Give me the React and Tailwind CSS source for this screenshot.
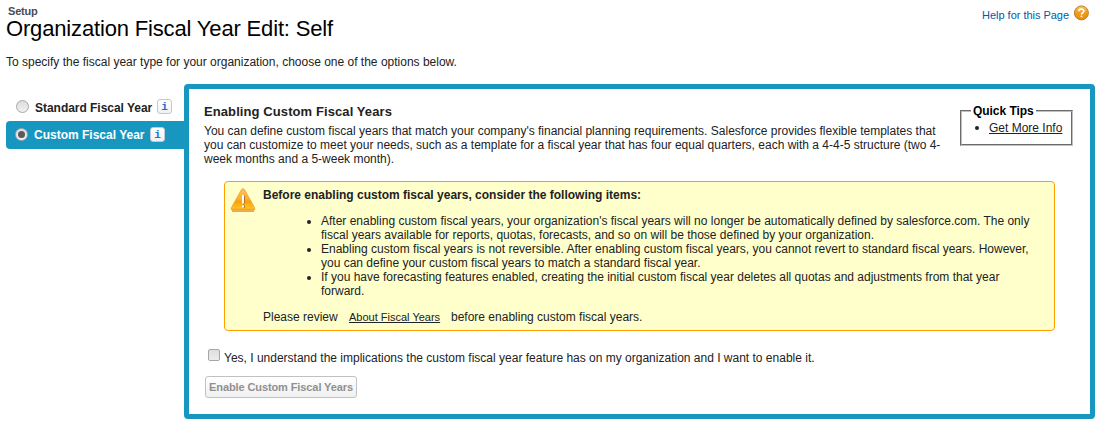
import React from 'react';

function InfoBadge() {
  return (
    <span className="flex h-[15px] w-[15px] shrink-0 items-center justify-center rounded-[3px] border border-[#c4c9cf] bg-linear-to-b from-white to-[#f0f1f4] pt-[1px] font-['Liberation_Mono',monospace] text-[11px] font-bold leading-none text-[#1f6fc6]">
      i
    </span>
  );
}

function Radio({ checked }) {
  return (
    <span className="mt-[1px] flex h-[13px] w-[13px] shrink-0 items-center justify-center rounded-full border border-[#a8a8a8] bg-linear-to-b from-[#dcdcdc] to-[#f1f1f1]">
      {checked && <span className="h-[7px] w-[7px] rounded-full bg-[#5a5a5a]" />}
    </span>
  );
}

function WarningIcon() {
  return (
    <svg className="block h-6 w-[26px]" viewBox="0 0 26 24">
      <defs>
        <linearGradient id="warn" x1="0" y1="0" x2="0" y2="1">
          <stop offset="0" stopColor="#fbc55c" />
          <stop offset="0.45" stopColor="#fbb130" />
          <stop offset="0.6" stopColor="#fb9f0c" />
          <stop offset="0.88" stopColor="#fdc21e" />
          <stop offset="1" stopColor="#f49a20" />
        </linearGradient>
      </defs>
      <path d="M2 23.4h22" stroke="#b5aa90" strokeWidth="1" />
      <path d="M11.5 1.6Q13 -0.4 14.5 1.6L24.7 19.8Q25.4 22.4 23.4 22.4H2.6Q.6 22.4 1.3 19.8Z" fill="url(#warn)" stroke="#f0a040" strokeWidth="0.8" />
      <path d="M13 7.6h2v7l-1 2.2h-1zM13 17.8h2v2h-2.4z" fill="#a8752a" />
      <path d="M12 7h2v7l-.5 2h-1l-.5-2zM12 17.4h2v2h-2z" fill="#fff" />
    </svg>
  );
}

function HelpIcon() {
  return (
    <svg className="block h-4 w-4" viewBox="0 0 16 16">
      <defs>
        <linearGradient id="help" x1="0" y1="0" x2="0" y2="1">
          <stop offset="0" stopColor="#f9c56c" />
          <stop offset="0.5" stopColor="#ef9c1c" />
          <stop offset="1" stopColor="#ea8c08" />
        </linearGradient>
      </defs>
      <circle cx="8.4" cy="7.9" r="7" fill="url(#help)" stroke="#b87418" strokeWidth="0.9" />
      <path d="M5.8 6.2C5.8 3.4 10.9 3.4 10.9 6.1C10.9 7.7 8.4 7.8 8.4 9.6" fill="none" stroke="#fff" strokeWidth="1.6" />
      <path d="M7.6 10.6h1.7v1.6H7.6z" fill="#fff" />
    </svg>
  );
}

function Bullet({ children }) {
  return (
    <li className="flex">
      <span className="mr-[10px] mt-[6px] h-1 w-1 shrink-0 rounded-full bg-[#222]" />
      <div>{children}</div>
    </li>
  );
}

export default function App() {
  return (
    <div className="h-[425px] w-[1100px] overflow-hidden bg-white font-['Liberation_Sans',Arial,sans-serif] text-xs leading-[14px] whitespace-nowrap text-[#222]">
      <header className="flex h-[55px] justify-between">
        <div className="pl-[6px] pt-[5px]">
          <div className="pl-[2px] text-[11px] font-bold leading-[13px] tracking-[-0.2px] text-[#4a4a56]">Setup</div>
          <h1 className="text-[22px] leading-[22px] tracking-[-0.16px] text-black">Organization Fiscal Year Edit: Self</h1>
        </div>
        <div className="flex items-start pr-[11px] pt-[5px]">
          <a className="mr-1 mt-[3px] text-[11px] tracking-[-0.03px] text-[#015ba7]">Help for this Page</a>
          <HelpIcon />
        </div>
      </header>
      <p className="h-[29px] pl-[6px]">To specify the fiscal year type for your organization, choose one of the options below.</p>
      <div className="flex">
        <nav className="w-[184px] pl-[6px] pt-[10px]">
          <div className="flex h-[27px] items-start pl-[10px] pt-[5px]">
            <Radio />
            <span className="ml-[6px] mr-[5px] mt-[2px] w-[117px] font-bold tracking-[-0.03px]">Standard Fiscal Year</span>
            <InfoBadge />
          </div>
          <div className="flex h-7 items-start rounded-l-[4px] bg-[#1797c0] pl-[9px] pt-[6px]">
            <Radio checked />
            <span className="ml-[6px] mr-[5px] mt-[1px] w-[111px] font-bold text-white">Custom Fiscal Year</span>
            <InfoBadge />
          </div>
        </nav>
        <main className="h-[335px] w-[911px] rounded-[4px] border-[5px] border-[#1797c0] bg-white pl-[15px]">
          <div className="flex h-[92px]">
            <div className="w-[756px] pt-[15px]">
              <h2 className="mb-[5px] text-[13px] font-bold leading-[15px] tracking-[0.09px]">Enabling Custom Fiscal Years</h2>
              <p>
                <span>You can define custom fiscal years that match your company's financial planning requirements. Salesforce provides flexible templates that</span><br />
                <span>you can customize to meet your needs, such as a template for a fiscal year that has four equal quarters, each with a 4-4-5 structure (two 4-</span><br />
                <span>week months and a 5-week month).</span>
              </p>
            </div>
            <fieldset className="mt-[15px] h-[42px] w-[113px] border-2 border-[#c0c0c0] pl-[9px] [border-style:groove]">
              <legend className="bg-white px-[2px] font-bold tracking-[-0.05px] text-black">Quick Tips</legend>
              <div className="flex items-center pt-[3px]">
                <span className="ml-[4px] mr-[10px] h-1 w-1 rounded-full bg-[#222]" />
                <a className="underline underline-offset-1">Get More Info</a>
              </div>
            </fieldset>
          </div>
          <section className="ml-5 flex h-[150px] w-[831px] rounded-[4px] border border-[#ff9e00] bg-[#ffffcc]">
            <div className="w-[38px] pl-[5px] pt-[6px]"><WarningIcon /></div>
            <div className="pt-[6px]">
              <h3 className="mb-3 font-bold">Before enabling custom fiscal years, consider the following items:</h3>
              <ul className="mb-3 pl-11">
                <Bullet>
                  <span>After enabling custom fiscal years, your organization's fiscal years will no longer be automatically defined by salesforce.com. The only</span><br />
                  <span>fiscal years available for reports, quotas, forecasts, and so on will be those defined by your organization.</span>
                </Bullet>
                <Bullet>
                  <span>Enabling custom fiscal years is not reversible. After enabling custom fiscal years, you cannot revert to standard fiscal years. However,</span><br />
                  <span>you can define your custom fiscal years to match a standard fiscal year.</span>
                </Bullet>
                <Bullet>
                  <span>If you have forecasting features enabled, creating the initial custom fiscal year deletes all quotas and adjustments from that year</span><br />
                  <span>forward.</span>
                </Bullet>
              </ul>
              <p className="flex">
                <span className="w-[86px]">Please review</span>
                <a className="w-[102px] text-[11px] underline underline-offset-1">About Fiscal Years</a>
                <span>before enabling custom fiscal years.</span>
              </p>
            </div>
          </section>
          <label className="mt-[18px] flex h-4 items-start pl-[4px]">
            <span className="mr-[4px] h-3 w-3 rounded-[2px] border border-[#a5a5a5] bg-linear-to-b from-[#dedede] to-[#ededed]" />
            <span className="pt-[2px]">Yes, I understand the implications the custom fiscal year feature has on my organization and I want to enable it.</span>
          </label>
          <button className="ml-[1px] mt-[11px] flex h-[22px] w-[152px] items-center justify-center rounded-[3px] border border-[#c1c1c1] bg-linear-to-b from-white to-[#f0f0f0] text-[11px] font-bold tracking-[-0.1px] text-[#909090]">Enable Custom Fiscal Years</button>
        </main>
      </div>
    </div>
  );
}
